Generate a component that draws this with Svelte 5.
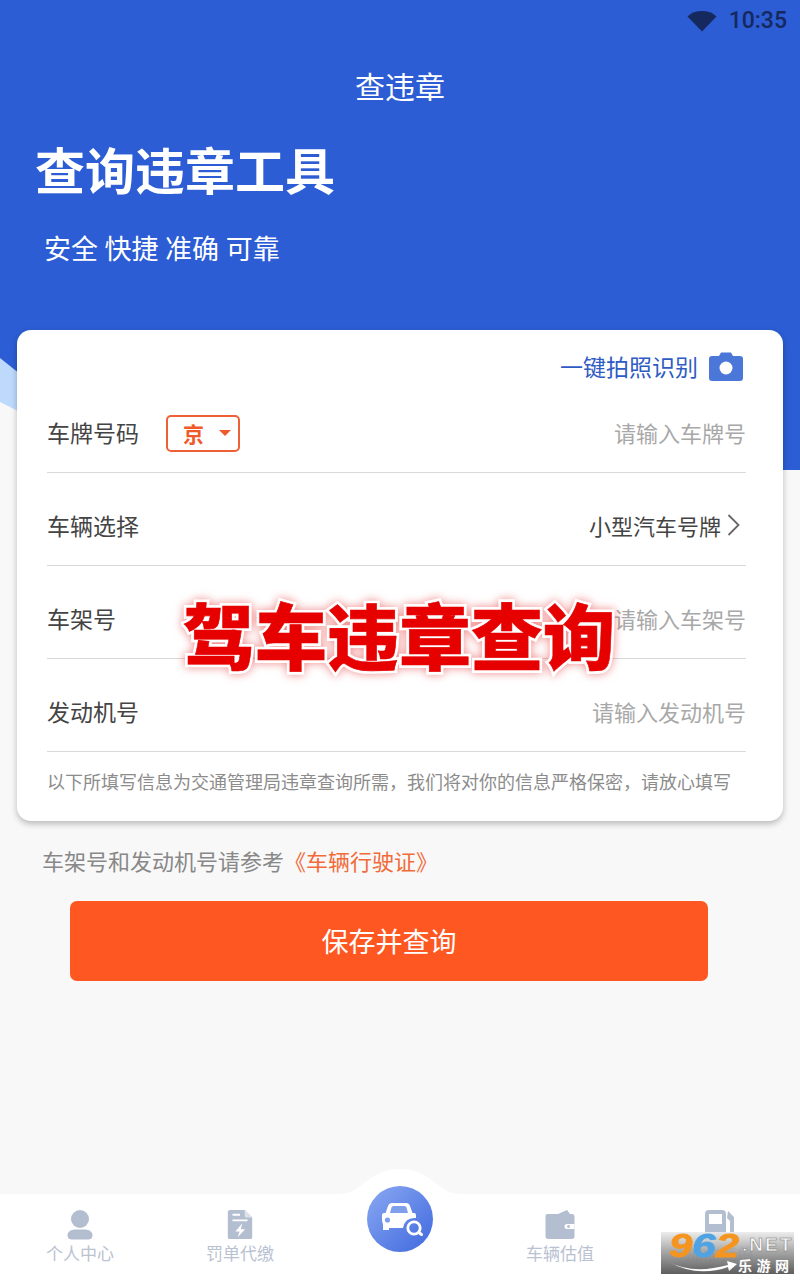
<script>
  const rows = [
    { label: '车架号', value: '请输入车架号' },
    { label: '发动机号', value: '请输入发动机号' }
  ];
  const stamp = '驾车违章查询';
</script>

<div class="page">
  <header class="hero">
    <svg class="wave" width="800" height="140" viewBox="0 0 800 140" aria-hidden="true">
      <path d="M0 28 L40 60 L40 140 L0 140 Z" fill="#bdd9fb" />
      <path d="M0 72 L40 92 L40 140 L0 140 Z" fill="#f8f8f8" />
    </svg>
    <div class="status">
      <svg width="30" height="22" viewBox="0 0 30 22" aria-hidden="true">
        <path d="M0.5 6.5 C8 -0.8 22 -0.8 29.5 6.5 L15 21.5 Z" fill="#15295f" />
      </svg>
      <span>10:35</span>
    </div>
    <div class="title">查违章</div>
    <h1>查询违章工具</h1>
    <p class="sub">安全 快捷 准确 可靠</p>
  </header>

  <section class="card">
    <div class="scan">
      <span>一键拍照识别</span>
      <svg width="34" height="29" viewBox="0 0 34 29" aria-hidden="true">
        <path d="M3 4 H10 L12 0.5 H22 L24 4 H31 Q34 4 34 7 V26 Q34 29 31 29 H3 Q0 29 0 26 V7 Q0 4 3 4 Z" fill="#4b78d8" />
        <circle cx="17" cy="16" r="6.5" fill="#fff" />
      </svg>
    </div>
    <div class="row first">
      <span class="label">车牌号码</span>
      <span class="plate">京<i></i></span>
      <span class="ph">请输入车牌号</span>
    </div>
    <div class="row">
      <span class="label">车辆选择</span>
      <span class="val">小型汽车号牌
        <svg width="13" height="22" viewBox="0 0 13 22" aria-hidden="true">
          <path d="M1.5 1 L11.5 11 L1.5 21" fill="none" stroke="#666" stroke-width="1.8" />
        </svg>
      </span>
    </div>
    {#each rows as r}
      <div class="row">
        <span class="label">{r.label}</span>
        <span class="ph">{r.value}</span>
      </div>
    {/each}
    <p class="note">以下所填写信息为交通管理局违章查询所需，我们将对你的信息严格保密，请放心填写</p>
  </section>

  <p class="ref">车架号和发动机号请参考<em>《车辆行驶证》</em></p>
  <button class="save">保存并查询</button>

  <nav class="tabs">
    <div class="bump"></div>
    <div class="tab">
      <svg width="26" height="30" viewBox="0 0 26 30" aria-hidden="true">
        <circle cx="13" cy="9" r="9" fill="#b4bed1" />
        <path d="M7 19.5 H19 Q26 20.5 25.5 26 Q25 29.5 21 29.5 H5 Q1 29.5 0.5 26 Q0 20.5 7 19.5 Z" fill="#b4bed1" />
      </svg>
      <span>个人中心</span>
    </div>
    <div class="tab">
      <svg width="26" height="32" viewBox="0 0 26 32" aria-hidden="true">
        <path d="M3 0 H18 L26 8 V29 Q26 31 23 31 H3 Q0 31 0 29 V2 Q0 0 3 0 Z" fill="#b4bed1" />
        <path d="M18 0 L26 8 H20 Q18 8 18 6 Z" fill="#dde2eb" />
        <path d="M5 5 H13 M5 11 H21" stroke="#fff" stroke-width="2" />
        <path d="M15.5 14 L8 23 H12.5 L10.5 29 L18.5 20.5 H13.8 Z" fill="#fff" />
      </svg>
      <span>罚单代缴</span>
    </div>
    <div class="tab center">
      <div class="fab">
        <svg width="66" height="66" viewBox="367 1186 66 66" aria-hidden="true">
          <path d="M382 1215 Q382 1213 384 1213 H385.5 L388 1206 Q389 1203 392 1203 H406 Q409 1203 410 1206 L412.5 1213 H414 Q416 1213 416 1215 V1218 Q405 1217 403 1228 H389 V1230 H383 V1224 Q382 1222 382 1220 Z" fill="#fff" />
          <path d="M390 1213 L391.5 1207.5 Q392 1206 393.5 1206 H404.5 Q406 1206 406.5 1207.5 L408 1213 Z" fill="#7f9fec" />
          <circle cx="387.5" cy="1220" r="2.6" fill="#7f9fec" />
          <circle cx="414" cy="1228" r="6.2" fill="none" stroke="#fff" stroke-width="2.8" />
          <path d="M418.8 1232.5 L421.5 1234.5" stroke="#fff" stroke-width="3" stroke-linecap="round" />
        </svg>
      </div>
    </div>
    <div class="tab">
      <svg width="30" height="30" viewBox="0 0 30 30" aria-hidden="true">
        <path d="M13 4 L22 0 L25 4 Z" fill="#b4bed1" />
        <path d="M2.5 4 H27 Q29.5 4 29.5 7 V26 Q29.5 29 27 29 H3 Q0.5 29 0.5 26 V6 Q0.5 4 2.5 4 Z" fill="#b4bed1" />
        <path d="M22 14 H29.5 V19 H22 Q19.5 19 19.5 16.5 Q19.5 14 22 14 Z" fill="#fff" />
        <circle cx="23.5" cy="16.5" r="1.4" fill="#b4bed1" />
      </svg>
      <span>车辆估值</span>
    </div>
    <div class="tab">
      <svg width="30" height="30" viewBox="0 0 30 30" aria-hidden="true">
        <path d="M4 0 H17 Q21 0 21 4 V30 H0 V4 Q0 0 4 0 Z M4 4 V14 H17 V4 Z" fill="#b4bed1" fill-rule="evenodd" />
        <path d="M23 1 L29 7 V25 Q29 28 26 28 H22 V25 H25 V11 L22 8 Z" fill="#b4bed1" />
      </svg>
      <span>加油充值</span>
    </div>
  </nav>

  <div class="stamp" data-text={stamp}>{stamp}</div>

  <div class="mark">
    <span class="num"><b class="o">9</b><b class="b">6</b><b class="o">2</b></span>
    <span class="net">.NET</span>
    <span class="cn">乐游网</span>
    <svg class="swoosh" width="70" height="14" viewBox="0 0 70 14" aria-hidden="true">
      <path d="M0 1 Q25 15 61 5 L60 1 L70 4 L62 11 L61 7 Q30 18 0 1 Z" fill="#fff" />
    </svg>
  </div>
</div>

<style>
  :global(body) {
    margin: 0;
    background: #f8f8f8;
  }
  .page {
    position: relative;
    width: 800px;
    height: 1280px;
    overflow: hidden;
    background: #f8f8f8;
    font-family: "Noto Sans CJK SC", "Noto Sans", sans-serif;
  }
  .hero {
    position: relative;
    height: 470px;
    box-sizing: border-box;
    background: #2c5dd4;
    color: #fff;
  }
  .wave {
    position: absolute;
    left: 0;
    top: 330px;
  }
  .status {
    position: relative;
    height: 42px;
    display: flex;
    align-items: center;
    justify-content: flex-end;
    gap: 12px;
    padding-right: 13px;
    color: #15295f;
    font: 500 23px/44px Roboto, sans-serif;
  }
  .status svg {
    margin-top: -1px;
  }
  .title {
    position: relative;
    margin-top: 22px;
    height: 42px;
    line-height: 42px;
    text-align: center;
    font-size: 30px;
  }
  h1 {
    position: relative;
    margin: 26px 0 0 35px;
    font-size: 50px;
    line-height: 72px;
    font-weight: 700;
  }
  .sub {
    position: relative;
    margin: 24px 0 0 44px;
    font-size: 27px;
    line-height: 40px;
    word-spacing: 0.5px;
  }
  .card {
    position: relative;
    margin: -140px 17px 0;
    height: 491px;
    box-sizing: border-box;
    padding: 0 37px 0 30px;
    background: #fff;
    border-radius: 14px;
    box-shadow: 0 3px 6px rgba(0, 0, 0, 0.25);
  }
  .scan {
    height: 50px;
    padding-top: 11px;
    display: flex;
    align-items: center;
    justify-content: flex-end;
    gap: 11px;
    padding-right: 3px;
    color: #2f5bc4;
    font-size: 23px;
  }
  .row {
    height: 80px;
    padding-top: 12px;
    border-bottom: 1px solid #d9d9d9;
    display: flex;
    align-items: center;
    color: #444;
  }
  .row.first {
    height: 81px;
    padding-top: 0;
  }
  .row.first .label {
    margin-right: 27px;
  }
  .label {
    font-size: 23px;
  }
  .ph {
    margin-left: auto;
    color: #a8a8a8;
    font-size: 22px;
  }
  .val {
    margin-left: auto;
    margin-right: 6px;
    display: flex;
    align-items: center;
    gap: 6px;
    color: #444;
    font-size: 22px;
  }
  .plate {
    margin-top: 3px;
    width: 74px;
    height: 37px;
    box-sizing: border-box;
    border: 2px solid #ee6136;
    border-radius: 5px;
    display: flex;
    align-items: center;
    padding-left: 15px;
    color: #ee5a2c;
    font-size: 21px;
    font-weight: 700;
  }
  .plate i {
    margin-left: 15px;
    width: 0;
    height: 0;
    border: 6px solid transparent;
    border-top: 6px solid #ee5a2c;
    border-bottom: 0;
  }
  .note {
    margin: 16px 0 0;
    color: #8c8c8c;
    font-size: 18px;
    line-height: 26px;
    white-space: nowrap;
  }
  .ref {
    margin: 23px 0 0 42px;
    color: #888;
    font-size: 22px;
    line-height: 32px;
  }
  .ref em {
    font-style: normal;
    color: #f26a38;
  }
  .save {
    display: block;
    margin: 25px 0 0 70px;
    width: 638px;
    height: 80px;
    padding: 0 0 1px;
    border: 0;
    border-radius: 7px;
    background: #ff5722;
    color: #fff;
    font: 400 27px "Noto Sans CJK SC", sans-serif;
  }
  .tabs {
    position: absolute;
    left: 0;
    right: 0;
    top: 1194px;
    height: 86px;
    background: #fff;
    display: grid;
    grid-template-columns: repeat(5, 1fr);
  }
  .bump {
    position: absolute;
    left: 340px;
    top: -25px;
    width: 120px;
    height: 26px;
    background: #fff;
    clip-path: path("M0 25 C22 25 28 0 60 0 C92 0 98 25 120 25 V26 H0 Z");
  }
  .tab {
    position: relative;
    display: flex;
    flex-direction: column;
    align-items: center;
    padding-top: 16px;
    color: #bac2d2;
    font-size: 17px;
    line-height: 22px;
  }
  .tab svg {
    height: 30px;
    margin-bottom: 2px;
  }
  .fab {
    position: absolute;
    left: 47px;
    top: -8px;
    width: 66px;
    height: 66px;
    border-radius: 50%;
    background: linear-gradient(135deg, #8aa9f2 0%, #3f68de 100%);
  }
  .tab .fab svg {
    display: block;
    width: 66px;
    height: 66px;
    margin: 0;
  }
  .stamp {
    position: absolute;
    left: 183px;
    top: 588px;
    width: 432px;
    white-space: nowrap;
    font-size: 72px;
    line-height: 90px;
    font-weight: 900;
    color: #e60000;
    -webkit-text-stroke: 0.6px #e60000;
    isolation: isolate;
    filter: drop-shadow(0 0 5px rgba(230, 60, 60, 0.6));
  }
  .stamp::before {
    content: attr(data-text);
    position: absolute;
    left: 0;
    top: 0;
    z-index: -1;
    -webkit-text-stroke: 6px #fff;
  }
  .mark {
    position: absolute;
    left: 661px;
    top: 1232px;
    width: 133px;
    height: 42px;
    background: linear-gradient(180deg, rgba(235, 235, 235, 0.92) 0%, rgba(160, 160, 160, 0.9) 45%, rgba(85, 85, 85, 0.95) 100%);
  }
  .num {
    position: absolute;
    left: 8px;
    top: 0;
    font: italic 700 33px/28px "Liberation Sans", sans-serif;
    transform: scaleX(1.27);
    transform-origin: left;
    -webkit-text-stroke: 0.8px currentColor;
  }
  .num b {
    font-weight: 700;
  }
  .o {
    color: #f5951f;
  }
  .b {
    color: #4fa3e3;
  }
  .net {
    position: absolute;
    left: 81px;
    top: 3px;
    color: #f6f6f6;
    font: 700 19px/20px "Liberation Sans", sans-serif;
    letter-spacing: 2px;
    -webkit-text-stroke: 0.5px #777;
  }
  .cn {
    position: absolute;
    left: 77px;
    top: 24px;
    color: #fff;
    font-size: 14px;
    font-weight: 700;
    line-height: 18px;
    letter-spacing: 4.5px;
    white-space: nowrap;
  }
  .swoosh {
    position: absolute;
    left: 6px;
    top: 28px;
  }
</style>
